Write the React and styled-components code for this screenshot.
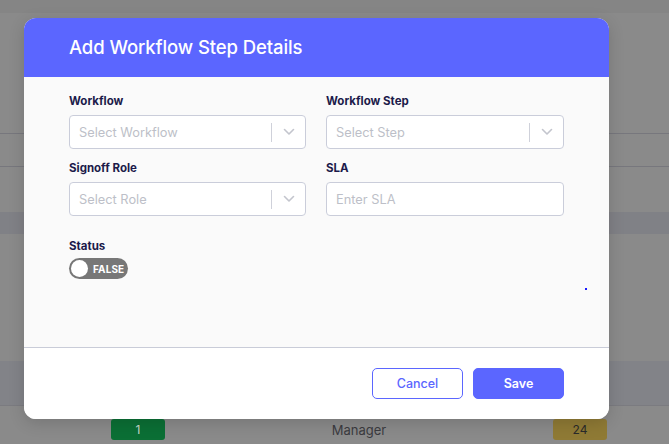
import React from "react";
import styled, { createGlobalStyle } from "styled-components";

const Global = createGlobalStyle`
  html, body { margin: 0; padding: 0; }
  body { font-family: Inter, "Noto Sans", sans-serif; background: #8a8a8a; }
  * { box-sizing: border-box; }
`;

const Page = styled.div`
  position: relative;
  width: 669px;
  height: 444px;
  overflow: hidden;
  background: #8a8a8a;
  display: flex;
  flex-direction: column;
`;

const Strip = styled.div`
  height: ${(p) => p.h}px;
  background: ${(p) => p.bg || "transparent"};
  border-bottom: ${(p) => (p.line ? `1px solid ${p.line}` : "none")};
  flex-shrink: 0;
`;

const BottomRow = styled.div`
  display: flex;
  align-items: flex-start;
  padding-left: 111px;
  height: 25px;
`;

const Badge = styled.div`
  width: 54px;
  height: 21px;
  border-radius: 3px;
  background: ${(p) => p.bg};
  color: ${(p) => p.fg};
  font-size: 12px;
  display: flex;
  align-items: center;
  justify-content: center;
`;

const CellText = styled.div`
  width: 388px;
  text-align: center;
  color: #3b3b40;
  font-size: 13px;
  padding-top: 3px;
`;

const Modal = styled.div`
  position: absolute;
  left: 24px;
  top: 18px;
  width: 585px;
  height: 401px;
  border-radius: 12px;
  overflow: hidden;
  background: #ffffff;
  display: flex;
  flex-direction: column;
  box-shadow: 0 4px 16px rgba(0, 0, 0, 0.15);
`;

const Header = styled.div`
  height: 59px;
  background: #5b66ff;
  display: flex;
  align-items: center;
  padding-left: 45px;
  padding-bottom: 2px;
`;

const Title = styled.h2`
  margin: 0;
  color: #ffffff;
  font-size: 18.5px;
  font-weight: 500;
  letter-spacing: -0.1px;
`;

const Body = styled.div`
  flex: 1;
  background: #fafafa;
  border-bottom: 1px solid #c9ccd8;
  padding: 18px 45px 0 45px;
  position: relative;
`;

const Grid = styled.div`
  display: grid;
  grid-template-columns: 237px 238px;
  column-gap: 20px;
  row-gap: 13px;
`;

const Field = styled.div`
  display: flex;
  flex-direction: column;
`;

const Label = styled.label`
  font-size: 11.5px;
  font-weight: 700;
  color: #1c1a4a;
  margin-bottom: 7px;
  line-height: 13px;
`;

const Box = styled.div`
  height: 34px;
  border: 1px solid #cacdda;
  border-radius: 4px;
  background: #ffffff;
  display: flex;
  align-items: center;
  padding-left: 9px;
`;

const Placeholder = styled.span`
  flex: 1;
  color: #bdbfc8;
  font-size: 12.8px;
`;

const Sep = styled.span`
  width: 1px;
  height: 19px;
  background: #cfd1da;
`;

const Chevron = styled.span`
  width: 33px;
  display: flex;
  justify-content: center;
  align-items: center;
  color: #c3c5cd;
`;

const StatusWrap = styled.div`
  margin-top: 24px;
  display: flex;
  flex-direction: column;
`;

const Toggle = styled.div`
  width: 59px;
  height: 21px;
  border-radius: 11px;
  background: #777777;
  display: flex;
  align-items: center;
  padding-left: 2px;
  gap: 5px;
  margin-top: -2px;
`;

const Knob = styled.span`
  width: 17px;
  height: 17px;
  border-radius: 50%;
  background: #ffffff;
`;

const ToggleText = styled.span`
  color: #ffffff;
  font-size: 10px;
  font-weight: 700;
  letter-spacing: 0.1px;
`;

const Dot = styled.span`
  position: absolute;
  left: 561px;
  top: 211px;
  width: 2px;
  height: 2px;
  background: #1a1aff;
`;

const Footer = styled.div`
  height: 71px;
  background: #ffffff;
  display: flex;
  justify-content: flex-end;
  align-items: flex-start;
  padding: 20px 45px 0 0;
  gap: 10px;
`;

const Button = styled.button`
  width: ${(p) => p.w}px;
  height: 31px;
  border-radius: 5px;
  font-family: inherit;
  font-size: 12.5px;
  font-weight: ${(p) => (p.primary ? 600 : 500)};
  border: 1px solid #5b66ff;
  background: ${(p) => (p.primary ? "#5b66ff" : "#ffffff")};
  color: ${(p) => (p.primary ? "#ffffff" : "#5b66ff")};
  padding: 0;
`;

const ChevronIcon = () => (
  <svg width="12" height="8" viewBox="0 0 12 8" fill="none">
    <path d="M1.5 1.5 L6 6 L10.5 1.5" stroke="currentColor" strokeWidth="1.6" strokeLinecap="round" strokeLinejoin="round" />
  </svg>
);

const Select = ({ placeholder }) => (
  <Box>
    <Placeholder>{placeholder}</Placeholder>
    <Sep />
    <Chevron>
      <ChevronIcon />
    </Chevron>
  </Box>
);

export default function App() {
  return (
    <>
      <Global />
      <Page>
        <Strip h={13} bg="#858585" />
        <Strip h={121} line="#77777d" />
        <Strip h={33} line="#77777d" />
        <Strip h={45} />
        <Strip h={22} bg="#808186" />
        <Strip h={127} />
        <Strip h={45} bg="#828388" line="#7b7b80" />
        <Strip h={13} />
        <BottomRow>
          <Badge bg="#0b6f35" fg="#c7d8cc">1</Badge>
          <CellText>Manager</CellText>
          <Badge bg="#8f7a35" fg="#2a2a2a">24</Badge>
        </BottomRow>

        <Modal>
          <Header>
            <Title>Add Workflow Step Details</Title>
          </Header>
          <Body>
            <Grid>
              <Field>
                <Label>Workflow</Label>
                <Select placeholder="Select Workflow" />
              </Field>
              <Field>
                <Label>Workflow Step</Label>
                <Select placeholder="Select Step" />
              </Field>
              <Field>
                <Label>Signoff Role</Label>
                <Select placeholder="Select Role" />
              </Field>
              <Field>
                <Label>SLA</Label>
                <Box>
                  <Placeholder>Enter SLA</Placeholder>
                </Box>
              </Field>
            </Grid>
            <StatusWrap>
              <Label>Status</Label>
              <Toggle>
                <Knob />
                <ToggleText>FALSE</ToggleText>
              </Toggle>
            </StatusWrap>
            <Dot />
          </Body>
          <Footer>
            <Button w={91}>Cancel</Button>
            <Button w={91} primary>Save</Button>
          </Footer>
        </Modal>
      </Page>
    </>
  );
}
